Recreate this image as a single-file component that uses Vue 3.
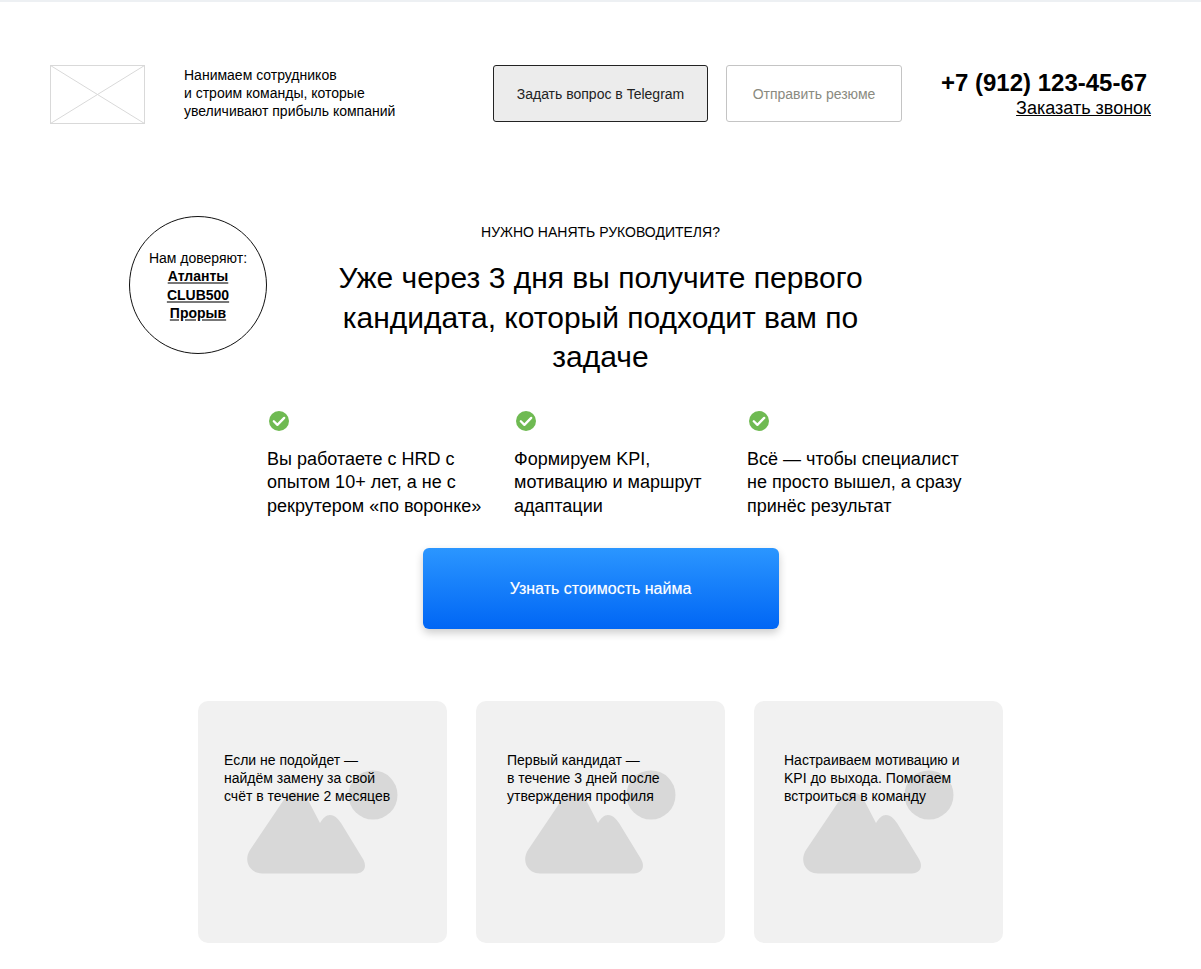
<script setup>
const features = [
  { cls: 'f1', lines: ['Вы работаете с HRD с', 'опытом 10+ лет, а не с', 'рекрутером «по воронке»'] },
  { cls: 'f2', lines: ['Формируем KPI,', 'мотивацию и маршрут', 'адаптации'] },
  { cls: 'f3', lines: ['Всё — чтобы специалист', 'не просто вышел, а сразу', 'принёс результат'] }
]
const cards = [
  { cls: 'c1', lines: ['Если не подойдет —', 'найдём замену за свой', 'счёт в течение 2 месяцев'] },
  { cls: 'c2', lines: ['Первый кандидат —', 'в течение 3 дней после', 'утверждения профиля'] },
  { cls: 'c3', lines: ['Настраиваем мотивацию и', 'KPI до выхода. Помогаем', 'встроиться в команду'] }
]
const partners = ['Атланты', 'CLUB500', 'Прорыв']
</script>

<template>
  <div class="page">
    <div class="strip"></div>
    <header class="header">
      <svg class="logo" width="95" height="59" viewBox="0 0 95 59">
        <rect x="0.5" y="0.5" width="94" height="58" fill="#fff" stroke="#d9d9d9" />
        <path d="M0.5 0.5L94.5 58.5M94.5 0.5L0.5 58.5" stroke="#d9d9d9" fill="none" />
      </svg>
      <p class="tagline">Нанимаем сотрудников<br />и строим команды, которые<br />увеличивают прибыль компаний</p>
      <a class="btn btn-dark">Задать вопрос в Telegram</a>
      <a class="btn btn-light">Отправить резюме</a>
      <div class="contact">
        <div class="phone">+7 (912) 123-45-67</div>
        <a class="call">Заказать звонок</a>
      </div>
    </header>

    <section class="hero">
      <div class="badge">
        <span>Нам доверяют:</span>
        <a v-for="p in partners" :key="p">{{ p }}</a>
      </div>
      <p class="eyebrow">НУЖНО НАНЯТЬ РУКОВОДИТЕЛЯ?</p>
      <h1 class="title">Уже через 3 дня вы получите первого кандидата, который подходит вам по задаче</h1>
      <div class="features">
        <div v-for="f in features" :key="f.cls" class="feature" :class="f.cls">
          <svg class="check" width="20" height="20" viewBox="0 0 20 20">
            <circle cx="10" cy="10" r="10" fill="#6fba52" />
            <path d="M4.8 10.3L8.4 13.9L15.2 6.9" fill="none" stroke="#fff" stroke-width="2.3" stroke-linecap="round" stroke-linejoin="round" />
          </svg>
          <p><template v-for="(l, i) in f.lines" :key="i">{{ l }}<br /></template></p>
        </div>
      </div>
      <a class="cta">Узнать стоимость найма</a>
    </section>

    <section class="cards">
      <div v-for="c in cards" :key="c.cls" class="card" :class="c.cls">
        <svg class="ph" width="249" height="242" viewBox="0 0 249 242">
          <circle cx="175" cy="94" r="24.5" fill="#d8d8d8" />
          <path d="M64 172.5C52 172.5 45 160 52 149L87 97C92 89 105 89 110 99L122 122C125 117 128 114 132 114C137 114 140 118 143 122L165 158C170 167 165 172.5 157 172.5Z" fill="#d8d8d8" />
        </svg>
        <p><template v-for="(l, i) in c.lines" :key="i">{{ l }}<br /></template></p>
      </div>
    </section>
  </div>
</template>

<style>
html, body { margin: 0; background: #fff; }
</style>

<style scoped>
.page {
  width: 1201px;
  height: 969px;
  overflow: hidden;
  font-family: "Liberation Sans", Arial, sans-serif;
  color: #000;
  background: #fff;
}
.strip { height: 2px; background: #edf0f3; }
.header {
  display: flex;
  align-items: flex-start;
  padding: 63px 50px 0;
  height: 152px;
  box-sizing: border-box;
}
.logo { display: block; flex: none; }
.tagline {
  margin: 1px 0 0 39px;
  width: 270px;
  flex: none;
  padding-right: 39px;
  font-size: 14px;
  line-height: 18px;
}
.btn {
  display: flex;
  align-items: center;
  justify-content: center;
  box-sizing: border-box;
  height: 57px;
  border-radius: 3px;
  font-size: 14px;
  flex: none;
}
.btn-dark { width: 215px; background: #ececec; border: 1px solid #222; color: #222; }
.btn-light { width: 176px; margin-left: 18px; border: 1px solid #c4c4c4; color: #8a8a80; }
.contact { margin-left: 39px; width: 210px; flex: none; }
.phone { font-size: 24px; font-weight: 700; line-height: 34px; padding-top: 1px; }
.call {
  display: block;
  margin-top: -2px;
  text-align: right;
  font-size: 18px;
  line-height: 20px;
  text-decoration: underline;
}
.hero {
  position: relative;
  padding-top: 69px;
}
.badge {
  position: absolute;
  left: 129px;
  top: 62px;
  width: 138px;
  height: 138px;
  box-sizing: border-box;
  border: 1px solid #111;
  border-radius: 50%;
  display: flex;
  flex-direction: column;
  align-items: center;
  padding-top: 32px;
  font-size: 14px;
  line-height: 18.4px;
}
.badge a {
  font-weight: 700;
  text-decoration: underline;
  text-decoration-color: #777;
  text-decoration-thickness: 2px;
}
.eyebrow {
  margin: 0;
  text-align: center;
  font-size: 14px;
  line-height: 18px;
}
.title {
  margin: 17px auto 0;
  width: 561px;
  text-align: center;
  font-size: 30px;
  font-weight: 400;
  line-height: 39.5px;
}
.features {
  display: flex;
  margin-top: 34px;
  padding-left: 267px;
}
.feature p {
  margin: 17px 0 0;
  font-size: 18px;
  line-height: 23.5px;
  white-space: nowrap;
}
.check { display: block; margin-left: 2px; }
.f1 { width: 247px; }
.f2 { width: 233px; }
.cta {
  display: flex;
  align-items: center;
  justify-content: center;
  width: 356px;
  height: 81px;
  margin: 30px auto 0;
  border-radius: 6px;
  background: linear-gradient(#2b96ff, #0066f5);
  box-shadow: 0 4px 8px rgba(0, 0, 0, 0.2);
  color: #fff;
  font-size: 16px;
  text-shadow: 0 0 1px rgba(255, 255, 255, 0.4);
}
.cards {
  display: flex;
  gap: 29px;
  margin-top: 72px;
  padding-left: 198px;
}
.card {
  position: relative;
  width: 249px;
  height: 242px;
  border-radius: 10px;
  background: #f1f1f1;
}
.ph { position: absolute; left: 0; top: 0; }
.card p {
  position: relative;
  margin: 0;
  padding-top: 50px;
  font-size: 14px;
  line-height: 18px;
  white-space: nowrap;
}
.c1 p { padding-left: 26px; }
.c2 p { padding-left: 31px; }
.c3 p { padding-left: 30px; }
</style>
